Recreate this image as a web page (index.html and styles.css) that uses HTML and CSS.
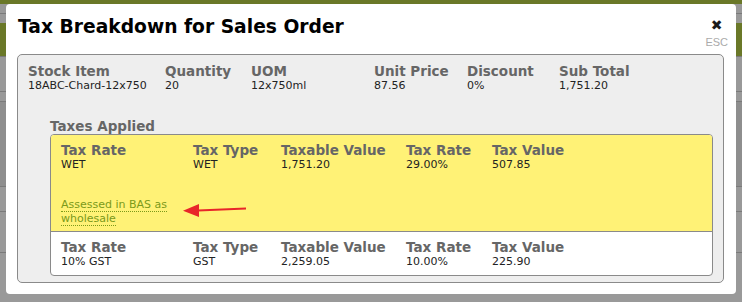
FILE: index.html
```html
<!DOCTYPE html>
<html lang="en">

<head>
	<title>Tax Breakdown</title>
	<meta charset="utf-8" />
	<meta name="viewport" content="width=device-width,initial-scale=1" />
	<link rel="stylesheet" href="styles.css">
</head>

<body>
	<div class="page">
		<div class="page-top"></div>
		<div class="page-row"></div>
		<div class="page-band"></div>
		<div class="page-row tall"></div>
		<div class="page-row"></div>
		<div class="page-row dark"></div>
		<div class="page-row"></div>
		<div class="page-row"></div>
		<div class="page-table">
			<div class="cell w133"></div>
			<div class="cell w8"></div>
			<div class="cell w84"></div>
			<div class="cell olive w33"></div>
			<div class="cell w9"></div>
			<div class="cell w75"></div>
			<div class="cell w10"></div>
			<div class="cell w74"></div>
			<div class="cell w9"></div>
			<div class="cell w72"></div>
			<div class="cell w101"></div>
			<div class="cell w82"></div>
			<div class="cell olive w35"></div>
			<div class="cell"></div>
		</div>
	</div>

	<div class="dialog">
		<div class="dialog-header">
			<h2>Tax Breakdown for Sales Order</h2>
			<div class="close">
				<span class="close-x">&#10006;</span>
				<span class="close-esc">ESC</span>
			</div>
		</div>

		<div class="panel">
			<div class="item-row">
				<div class="field">
					<label>Stock Item</label>
					<span>18ABC-Chard-12x750</span>
				</div>
				<div class="field">
					<label>Quantity</label>
					<span>20</span>
				</div>
				<div class="field">
					<label>UOM</label>
					<span>12x750ml</span>
				</div>
				<div class="field">
					<label>Unit Price</label>
					<span>87.56</span>
				</div>
				<div class="field">
					<label>Discount</label>
					<span>0%</span>
				</div>
				<div class="field">
					<label>Sub Total</label>
					<span>1,751.20</span>
				</div>
			</div>

			<div class="taxes">
				<h3>Taxes Applied</h3>
				<div class="tax-list">
					<div class="tax-row highlight">
						<div class="tax-fields">
							<div class="field">
								<label>Tax Rate</label>
								<span>WET</span>
							</div>
							<div class="field">
								<label>Tax Type</label>
								<span>WET</span>
							</div>
							<div class="field">
								<label>Taxable Value</label>
								<span>1,751.20</span>
							</div>
							<div class="field">
								<label>Tax Rate</label>
								<span>29.00%</span>
							</div>
							<div class="field">
								<label>Tax Value</label>
								<span>507.85</span>
							</div>
						</div>
						<div class="tax-note">
							<span class="note-link">Assessed in BAS as wholesale</span>
						</div>
						<svg class="arrow" width="66" height="16" viewBox="0 0 66 16">
							<path d="M15 8.5 L63 6.5" stroke="#e8262a" stroke-width="2.2" fill="none" />
							<path d="M0 8.8 L16 2 L16 15 Z" fill="#e8262a" />
						</svg>
					</div>
					<div class="tax-row">
						<div class="tax-fields">
							<div class="field">
								<label>Tax Rate</label>
								<span>10% GST</span>
							</div>
							<div class="field">
								<label>Tax Type</label>
								<span>GST</span>
							</div>
							<div class="field">
								<label>Taxable Value</label>
								<span>2,259.05</span>
							</div>
							<div class="field">
								<label>Tax Rate</label>
								<span>10.00%</span>
							</div>
							<div class="field">
								<label>Tax Value</label>
								<span>225.90</span>
							</div>
						</div>
					</div>
				</div>
			</div>
		</div>
	</div>
</body>

</html>
```

FILE: styles.css
```css
:root {
	--olive: #6a7828;
	--page-gray: #999999;
	--line-gray: #7a7a7a;
	--label-color: #666666;
	--text-color: #222222;
	--border-color: #8a8a8a;
	--panel-bg: #eeeeee;
	--highlight: #fff276;
	--note-color: #7c9a1a;
}

*,
*:before,
*:after {
	box-sizing: border-box;
	margin: 0;
	padding: 0;
}

body {
	width: 742px;
	height: 302px;
	overflow: hidden;
	position: relative;
	background-color: var(--page-gray);
	font-family: "DejaVu Sans", Verdana, sans-serif;
	color: var(--text-color);
}

/* dimmed page behind the dialog */
.page-top {
	height: 4px;
	background-color: var(--olive);
}

.page-row {
	height: 10px;
	border-bottom: 1px solid var(--line-gray);
}

.page-band {
	height: 34px;
	margin-top: 9px;
	background-color: var(--olive);
	border-bottom: 1px solid var(--line-gray);
}

.page-row.tall {
	height: 35px;
}

.page-row.dark {
	height: 85px;
	background-color: #8e8e8e;
}

.page-row:nth-child(7) {
	height: 25px;
}

.page-row:nth-child(8) {
	height: 41px;
}

.page-table {
	display: flex;
	height: 20px;
}

.cell {
	flex: none;
	border-right: 1px solid var(--line-gray);
}

.cell:last-child {
	flex: 1;
	border-right: 0;
}

.cell.olive {
	background-color: var(--olive);
}

.w8 { width: 8px; }
.w9 { width: 9px; }
.w10 { width: 10px; }
.w33 { width: 33px; }
.w35 { width: 35px; }
.w72 { width: 72px; }
.w74 { width: 74px; }
.w75 { width: 75px; }
.w82 { width: 82px; }
.w84 { width: 84px; }
.w101 { width: 101px; }
.w133 { width: 133px; }

/* dialog */
.dialog {
	position: absolute;
	left: 6px;
	top: 4px;
	width: 730px;
	height: 290px;
	background-color: white;
	border-radius: 4px;
	padding: 0 8px 11px 11px;
	display: flex;
	flex-direction: column;
}

.dialog-header {
	flex: none;
	display: flex;
	justify-content: space-between;
	align-items: flex-start;
	height: 50px;
}

h2 {
	margin-top: 11px;
	margin-left: 1px;
	font-size: 18.7px;
	line-height: 24px;
	font-weight: bold;
	color: black;
}

.close {
	margin-top: 13px;
	display: flex;
	flex-direction: column;
	align-items: center;
	cursor: pointer;
}

.close-x {
	font-size: 14px;
	line-height: 16px;
	color: #1a1a1a;
}

.close-esc {
	margin-top: 3px;
	font-family: "Liberation Sans", Arial, sans-serif;
	font-size: 11px;
	line-height: 12px;
	color: #aaaaaa;
}

.panel {
	flex: 1;
	margin-right: 4px;
	background-color: var(--panel-bg);
	border: 1px solid var(--border-color);
	border-radius: 5px;
	padding: 8px 10px 6px 10px;
}

.field {
	display: flex;
	flex-direction: column;
}

.field label {
	font-size: 13.5px;
	line-height: 16px;
	font-weight: bold;
	color: var(--label-color);
}

.field span {
	font-size: 11px;
	line-height: 14px;
}

.item-row {
	display: grid;
	grid-template-columns: 137px 86px 123px 93px 92px 1fr;
}

.taxes {
	margin: 25px 0 0 22px;
}

h3 {
	font-size: 13.5px;
	line-height: 16px;
	font-weight: bold;
	color: var(--label-color);
}

.tax-list {
	background-color: white;
	border: 1px solid var(--border-color);
	border-radius: 4px;
	overflow: hidden;
}

.tax-row {
	position: relative;
	padding: 7px 10px 6px 10px;
}

.tax-row.highlight {
	background-color: var(--highlight);
	border-bottom: 1px solid var(--border-color);
	padding-bottom: 5px;
}

.tax-fields {
	display: grid;
	grid-template-columns: 132px 88px 125px 86px 1fr;
}

.tax-note {
	width: 112px;
	margin-top: 26px;
	font-size: 11px;
	line-height: 14px;
}

.note-link {
	color: var(--note-color);
	border-bottom: 1px dotted var(--note-color);
}

.arrow {
	position: absolute;
	left: 132px;
	top: 67px;
}
```
